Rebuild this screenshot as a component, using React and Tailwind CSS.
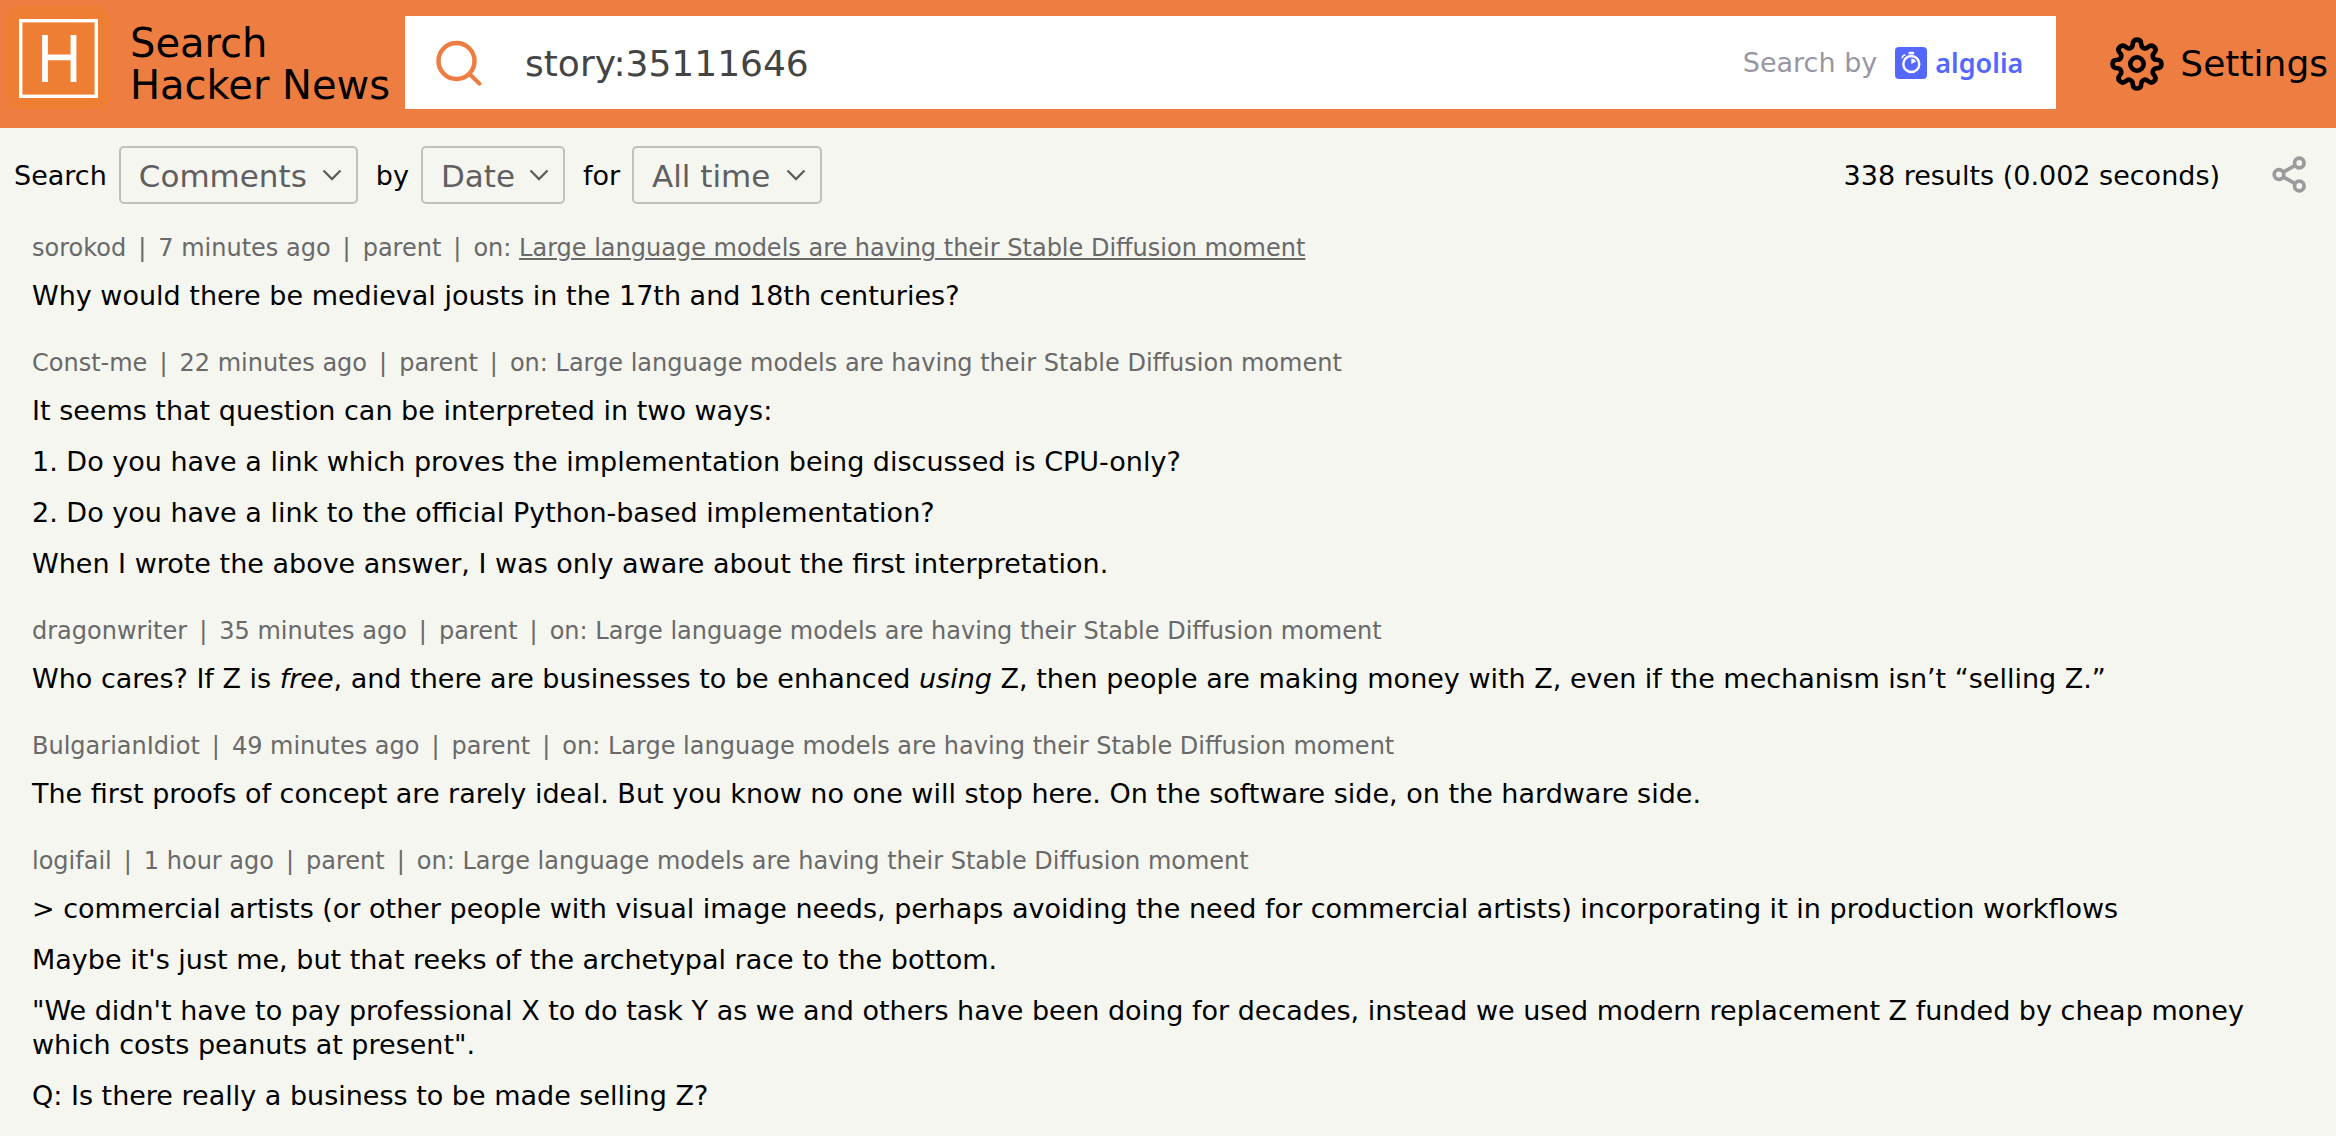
import React, { useState } from 'react';

const STORY = 'Large language models are having their Stable Diffusion moment';

const comments = [
  {
    author: 'sorokod',
    age: '7 minutes ago',
    active: true,
    body: ['Why would there be medieval jousts in the 17th and 18th centuries?'],
  },
  {
    author: 'Const-me',
    age: '22 minutes ago',
    body: [
      'It seems that question can be interpreted in two ways:',
      '1. Do you have a link which proves the implementation being discussed is CPU-only?',
      '2. Do you have a link to the official Python-based implementation?',
      'When I wrote the above answer, I was only aware about the first interpretation.',
    ],
  },
  {
    author: 'dragonwriter',
    age: '35 minutes ago',
    body: [
      <>
        Who cares? If Z is <i>free</i>, and there are businesses to be enhanced <i>using</i> Z, then people are
        making money with Z, even if the mechanism isn’t “selling Z.”
      </>,
    ],
  },
  {
    author: 'BulgarianIdiot',
    age: '49 minutes ago',
    body: [
      'The first proofs of concept are rarely ideal. But you know no one will stop here. On the software side, on the hardware side.',
    ],
  },
  {
    author: 'logifail',
    age: '1 hour ago',
    body: [
      '> commercial artists (or other people with visual image needs, perhaps avoiding the need for commercial artists) incorporating it in production workflows',
      "Maybe it's just me, but that reeks of the archetypal race to the bottom.",
      '"We didn\'t have to pay professional X to do task Y as we and others have been doing for decades, instead we used modern replacement Z funded by cheap money which costs peanuts at present".',
      'Q: Is there really a business to be made selling Z?',
    ],
  },
];

function Logo() {
  return (
    <svg viewBox="0 0 104 104" className="w-[104px] h-[104px] mt-[6px] self-start shrink-0" aria-hidden="true">
      <rect width="104" height="104" rx="14" fill="#ee7e33" />
      <rect x="14.700" y="14.700" width="75.600" height="75.600" fill="none" stroke="#fff" strokeWidth="3.400" />
      <path d="M39 29v47M67.500 29v47M39 51.300h28.500" fill="none" stroke="#fff" strokeWidth="5.800" />
    </svg>
  );
}

function SearchIcon() {
  return (
    <svg viewBox="0 0 48 48" className="w-12 h-12 shrink-0" fill="none" stroke="#ee7d41" aria-hidden="true">
      <circle cx="21.500" cy="22" r="18" strokeWidth="4.500" />
      <path d="M34.500 35l10 9.700" strokeWidth="4" strokeLinecap="round" />
    </svg>
  );
}

function AlgoliaMark() {
  return (
    <svg viewBox="0 0 32 32" className="w-8 h-8 shrink-0" aria-hidden="true">
      <rect width="32" height="32" rx="4" fill="#5468ff" />
      <circle cx="16.300" cy="17" r="8" fill="none" stroke="#fff" strokeWidth="2.400" />
      <path d="M16.300 11.500v5.500l4.800-2.600a5.500 5.500 0 0 0-4.800-2.900z" fill="#fff" />
      <path d="M13.500 7.300V5.800a1 1 0 0 1 1-1h3.600a1 1 0 0 1 1 1v1.500z" fill="#fff" />
      <path d="M7.600 11.200a1.300 1.300 0 0 1 0-1.700l1-1a1.300 1.300 0 0 1 1.800 0" fill="none" stroke="#fff" strokeWidth="1.600" />
    </svg>
  );
}

function GearIcon() {
  return (
    <svg viewBox="0 0 54 54" className="w-[54px] h-[54px] shrink-0" fill="none" stroke="currentColor" strokeWidth="4.600" strokeLinejoin="round" aria-hidden="true">
      <circle cx="27" cy="27" r="6.700" />
      <path d="M27 2.600c2.900 0 4.300 2 4.300 5 0 3.300 4 5 6.400 2.700 2.200-2 4.500-2.400 6.500-.4s1.600 4.300-.4 6.500c-2.300 2.400-.6 6.400 2.700 6.400 3 0 5 1.400 5 4.200s-2 4.300-5 4.300c-3.300 0-5 4-2.700 6.400 2 2.200 2.400 4.500.4 6.500s-4.300 1.600-6.500-.4c-2.400-2.300-6.400-.6-6.400 2.700 0 3-1.400 5-4.300 5s-4.300-2-4.300-5c0-3.300-4-5-6.400-2.700-2.200 2-4.500 2.400-6.500.4s-1.600-4.300.4-6.500c2.300-2.400.6-6.400-2.700-6.400-3 0-5-1.500-5-4.300s2-4.200 5-4.200c3.300 0 5-4 2.700-6.400-2-2.200-2.400-4.500-.4-6.500s4.300-1.600 6.500.4c2.400 2.300 6.400.6 6.400-2.700 0-3 1.400-5 4.300-5z" />
    </svg>
  );
}

function ShareIcon() {
  return (
    <svg viewBox="0 0 36 38" className="w-9 h-[38px]" fill="none" stroke="#9b9b9b" strokeWidth="3.700" aria-hidden="true">
      <circle cx="27.300" cy="7" r="4.800" />
      <circle cx="7" cy="18.500" r="4.800" />
      <circle cx="27.300" cy="30" r="4.800" />
      <path d="M11.200 16.100l11.900-6.700M11.200 20.900l11.900 6.700" />
    </svg>
  );
}

function Dropdown({ id, label, options, width }) {
  const [value, setValue] = useState(options[0]);

  return (
    <div className="flex items-center gap-3">
      <label htmlFor={id} className="pt-[2px]">{label}</label>
      <div className="relative">
        <select
          id={id}
          value={value}
          onChange={(e) => setValue(e.target.value)}
          className={`${width} h-[58px] pt-[2px] pl-[18px] pr-10 appearance-none rounded-[5px] border-2 border-[#c0c0bc] bg-transparent text-[31px] text-[#5f5f5f]`}
        >
          {options.map((o) => (
            <option key={o}>{o}</option>
          ))}
        </select>
        <svg viewBox="0 0 20 12" className="absolute right-4 top-[23px] w-5 h-3 pointer-events-none" fill="none" stroke="#5f5f5f" strokeWidth="2.400" aria-hidden="true">
          <path d="M1.500 1.500l8.500 8.500 8.500-8.500" />
        </svg>
      </div>
    </div>
  );
}

function Comment({ comment }) {
  return (
    <article className="flex flex-col gap-[15px]">
      <div className="text-[24px] leading-[32px] text-[#696969]">
        <a href="#author">{comment.author}</a>
        <span className="mx-3">|</span>
        <a href="#age">{comment.age}</a>
        <span className="mx-3">|</span>
        <a href="#parent">parent</a>
        <span className="mx-3">|</span>
        on: <a href="#story" className={comment.active ? 'underline' : ''}>{STORY}</a>
      </div>
      <div className="flex flex-col gap-[17px] text-[27px] leading-[34px]">
        {comment.body.map((p, i) => (
          <p key={i}>{p}</p>
        ))}
      </div>
    </article>
  );
}

export default function App() {
  const [query, setQuery] = useState('story:35111646');

  return (
    <div className="min-h-screen bg-[#f5f6f0] text-black font-['DejaVu_Sans',Verdana,sans-serif]">
      <header className="flex items-center h-32 pl-[6px] pr-2 bg-[#ee7d41]">
        <a href="#home" className="flex items-center gap-5 h-full shrink-0 w-[399px] whitespace-nowrap">
          <Logo />
          <span className="text-[40px] leading-[42px]">
            Search
            <br />
            Hacker News
          </span>
        </a>
        <div className="flex items-center self-start flex-1 h-[93px] mt-4 px-[30px] bg-white">
          <SearchIcon />
          <input
            type="text"
            aria-label="Search stories"
            value={query}
            onChange={(e) => setQuery(e.target.value)}
            className="flex-1 min-w-0 ml-[42px] pt-[2px] text-[36px] text-[#444] outline-none"
          />
          <span className="pt-[2px] text-[27px] text-[#9797a3]">Search by</span>
          <a href="#algolia" className="flex items-center gap-2 ml-[18px] mr-[3px] text-[#5468ff]">
            <AlgoliaMark />
            <span className="font-['Noto_Sans',sans-serif] text-[27px] leading-[32px] font-semibold">algolia</span>
          </a>
        </div>
        <a href="#settings" className="flex items-center gap-4 ml-[54px] text-[36px]">
          <GearIcon />
          Settings
        </a>
      </header>

      <div className="flex items-center gap-[18px] h-[94px] pl-[14px] pr-7 text-[27px]">
        <Dropdown id="type" label="Search" width="w-[239px]" options={['Comments', 'Stories', 'All']} />
        <Dropdown id="sort" label="by" width="w-[144px]" options={['Date', 'Popularity']} />
        <Dropdown id="range" label="for" width="w-[190px]" options={['All time', 'Last 24h', 'Past Week']} />
        <span className="ml-auto mr-[34px] pt-[2px]">338 results (0.002 seconds)</span>
        <button type="button" aria-label="Share">
          <ShareIcon />
        </button>
      </div>

      <main className="flex flex-col gap-[34px] pt-[10px] px-8 pb-5">
        {comments.map((c) => (
          <Comment key={c.author} comment={c} />
        ))}
      </main>
    </div>
  );
}
